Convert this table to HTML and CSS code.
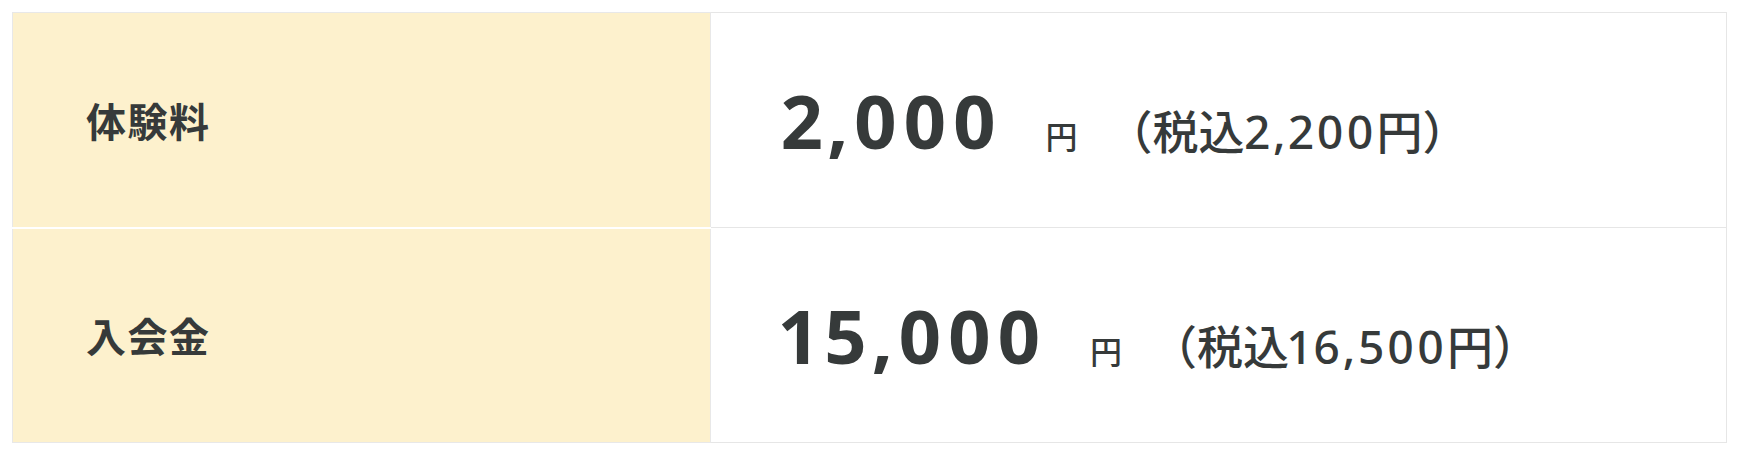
FILE: index.html
```html
<!DOCTYPE html>
<html lang="ja">
<head>
<meta charset="utf-8">
<link rel="stylesheet" href="styles.css">
</head>
<body>
<div class="wrap">
  <table class="price">
    <tr>
      <th class="label">体験料</th>
      <td class="value"><span class="num">2,000</span><span class="yen">円</span><span class="tax">（税込<span class="digits">2,200</span>円）</span></td>
    </tr>
    <tr>
      <th class="label">入会金</th>
      <td class="value"><span class="num">15,000</span><span class="yen">円</span><span class="tax">（税込<span class="digits">16,500</span>円）</span></td>
    </tr>
  </table>
</div>
</body>
</html>
```

FILE: styles.css
```css
html, body {
  margin: 0;
  padding: 0;
  background: #ffffff;
}
.wrap {
  padding: 12px 13px 14px 12px;
}
.price {
  width: 100%;
  border-collapse: collapse;
  font-family: "Noto Sans CJK JP", "Noto Sans", sans-serif;
  color: #363a3a;
}
.price tr {
  height: 215px;
}
.label {
  width: 698px;
  box-sizing: border-box;
  background: #fdf1cd;
  text-align: left;
  font-size: 40px;
  font-weight: 700;
  letter-spacing: 1.5px;
  padding: 0 0 0 73px;
  border: 1px solid #e8e8e8;
  border-bottom: 2px solid #ffffff;
  vertical-align: middle;
}
.price tr:last-child .label {
  border-bottom: 1px solid #e8e8e8;
}
.value {
  background: #ffffff;
  border: 1px solid #e6e6e6;
  padding: 0 0 0 70px;
  vertical-align: middle;
  white-space: nowrap;
}
.num {
  font-family: "Noto Sans", "Noto Sans CJK JP", sans-serif;
  font-variant-numeric: proportional-nums;
  font-size: 74px;
  font-weight: 700;
  letter-spacing: 0.065em;
}
.yen {
  font-size: 32px;
  font-weight: 500;
  margin-left: 44px;
}
.tax {
  font-size: 46px;
  font-weight: 500;
  margin-left: 29px;
}
.digits {
  font-family: "Noto Sans", "Noto Sans CJK JP", sans-serif;
  font-variant-numeric: proportional-nums;
  font-weight: 500;
  letter-spacing: 0.06em;
}
```
